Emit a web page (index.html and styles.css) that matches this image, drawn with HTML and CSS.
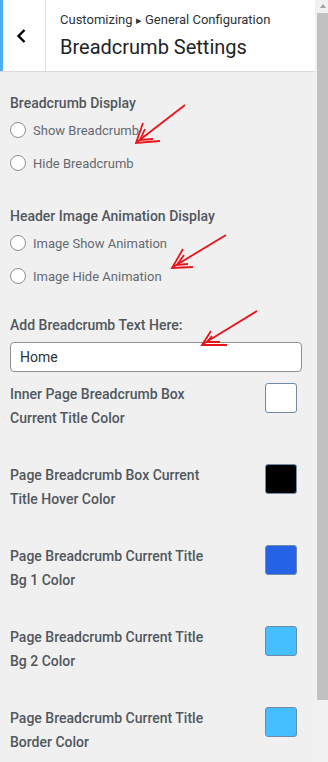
FILE: index.html
```html
<!DOCTYPE html>
<html lang="en">
<head>
  <meta charset="UTF-8">
  <title>Breadcrumb Settings</title>
  <meta name="viewport" content="width=device-width, initial-scale=1.0">
  <link rel="stylesheet" href="styles.css">
</head>
<body>
  <div class="wrap">
    <div class="panel">
      <header class="header">
        <button class="back-btn" aria-label="Back">
          <svg width="12" height="16" viewBox="0 0 12 16"><polyline points="8.5,2 2.5,8 8.5,14" fill="none" stroke="#000" stroke-width="2.4"/></svg>
        </button>
        <div class="title-box">
          <div class="crumb">Customizing <span class="tri">&#9656;</span> General Configuration</div>
          <div class="title">Breadcrumb Settings</div>
        </div>
      </header>

      <main class="content">
        <section class="group">
          <div class="group-title">Breadcrumb Display</div>
          <label class="radio-row"><input type="radio" name="bc"> Show Breadcrumb</label>
          <label class="radio-row"><input type="radio" name="bc"> Hide Breadcrumb</label>
        </section>

        <section class="group">
          <div class="group-title">Header Image Animation Display</div>
          <label class="radio-row"><input type="radio" name="anim"> Image Show Animation</label>
          <label class="radio-row"><input type="radio" name="anim"> Image Hide Animation</label>
        </section>

        <section class="group text-group">
          <div class="group-title">Add Breadcrumb Text Here:</div>
          <input class="text-input" type="text" value="Home">
        </section>

        <div class="color-list">
          <div class="color-row">
            <div class="color-label">Inner Page Breadcrumb Box Current Title Color</div>
            <button class="swatch" style="background:#ffffff"></button>
          </div>
          <div class="color-row">
            <div class="color-label">Page Breadcrumb Box Current Title Hover Color</div>
            <button class="swatch" style="background:#000000"></button>
          </div>
          <div class="color-row">
            <div class="color-label">Page Breadcrumb Current Title Bg 1 Color</div>
            <button class="swatch" style="background:#2563e6"></button>
          </div>
          <div class="color-row">
            <div class="color-label">Page Breadcrumb Current Title Bg 2 Color</div>
            <button class="swatch" style="background:#45bfff"></button>
          </div>
          <div class="color-row">
            <div class="color-label">Page Breadcrumb Current Title Border Color</div>
            <button class="swatch" style="background:#45bfff"></button>
          </div>
        </div>
      </main>
    </div>

    <div class="scrollbar">
      <div class="scroll-up"></div>
      <div class="scroll-thumb"></div>
    </div>
  </div>

  <!-- red annotation arrows -->
  <svg class="arrows" width="328" height="762" viewBox="0 0 328 762">
    <g fill="none" stroke="#e8141b" stroke-width="1.8" stroke-linejoin="miter">
      <line x1="185" y1="105" x2="137" y2="142"/>
      <polyline points="143,123 136,143 160,141"/>
      <polyline points="145,129 140,140 153,139"/>

      <line x1="226" y1="235" x2="173" y2="267"/>
      <polyline points="183,249 172,268 193,267"/>
      <polyline points="184,255 177,265 188,264"/>

      <line x1="257" y1="311" x2="203" y2="344"/>
      <polyline points="211,331 202,345 227,345"/>
      <polyline points="212,336 207,342 220,342"/>
    </g>
  </svg>
</body>
</html>
```

FILE: styles.css
```css
body {
  margin: 0;
  background: #f0f0f0;
  font-family: Roboto, 'Noto Sans', Arial, sans-serif;
  color: #50575e;
  overflow: hidden;
}
.wrap {
  display: flex;
  height: 762px;
}
.panel {
  width: 315px;
  flex: none;
}
.header {
  display: flex;
  height: 71px;
  background: #fff;
  border-bottom: 1px solid #dcdcde;
}
.back-btn {
  width: 46px;
  flex: none;
  background: #fff;
  border: none;
  border-left: 3px solid #4aaef5;
  border-right: 1px solid #dcdcde;
  padding: 0 4px 0 0;
  display: flex;
  align-items: center;
  justify-content: center;
}
.title-box {
  padding: 11px 0 0 14px;
}
.crumb {
  font-size: 13px;
  line-height: 18px;
  color: #2c3338;
}
.tri {
  font-size: 11px;
}
.title {
  font-size: 20px;
  line-height: 28px;
  color: #1d2327;
  margin-top: 3px;
}
.content {
  padding: 21px 10px 0 10px;
}
.group {
  display: flex;
  flex-direction: column;
  gap: 9px;
  margin-bottom: 31px;
}
.group-title {
  font-size: 14px;
  font-weight: 500;
  line-height: 20px;
  color: #50575e;
  margin-bottom: -4px;
}
.radio-row {
  display: flex;
  align-items: center;
  gap: 7px;
  height: 24px;
  font-size: 13px;
  color: #646970;
}
.radio-row input {
  appearance: none;
  margin: 0;
  width: 16px;
  height: 16px;
  border: 1px solid #8c8f94;
  border-radius: 50%;
  background: #fff;
}
.text-group {
  margin-top: -4px;
  margin-bottom: 10px;
  gap: 7px;
}
.text-group .group-title {
  margin-bottom: 0;
}
.text-input {
  box-sizing: border-box;
  width: 292px;
  height: 30px;
  margin: 0;
  padding: 0 9px;
  border: 1px solid #8c8f94;
  border-radius: 4px;
  background: #fff;
  font-family: inherit;
  font-size: 14px;
  color: #2c3338;
}
.color-list {
  display: flex;
  flex-direction: column;
  gap: 33px;
}
.color-row {
  display: flex;
  justify-content: space-between;
  align-items: flex-start;
}
.color-label {
  width: 200px;
  font-size: 14px;
  font-weight: 500;
  line-height: 24px;
  color: #50575e;
}
.swatch {
  width: 32px;
  height: 30px;
  margin: 1px 8px 0 0;
  padding: 0;
  border: 1px solid #6f8aa5;
  border-radius: 3px;
}
.scrollbar {
  flex: 1;
  background: #f1f1f1;
  display: flex;
  flex-direction: column;
  align-items: flex-end;
}
.scroll-up {
  height: 13px;
  width: 11px;
  position: relative;
}
.scroll-up::after {
  content: "";
  position: absolute;
  left: 3px;
  top: 4px;
  border-left: 3px solid transparent;
  border-right: 3px solid transparent;
  border-bottom: 4px solid #a3a3a3;
}
.scroll-thumb {
  width: 11px;
  height: 687px;
  background: #c1c1c1;
}
.arrows {
  position: absolute;
  left: 0;
  top: 0;
  pointer-events: none;
}
```
